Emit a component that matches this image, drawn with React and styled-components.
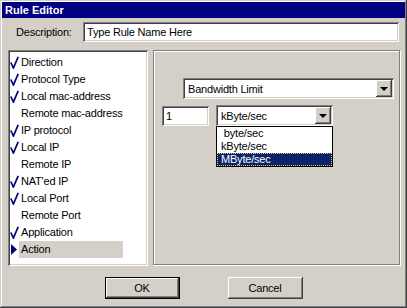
import styled, { createGlobalStyle } from "styled-components";

const Global = createGlobalStyle`
  body {
    margin: 0;
    background: #D4D0C8;
    font-family: "Liberation Sans", Arial, sans-serif;
    font-size: 11px;
    letter-spacing: -0.2px;
    color: #000;
  }
`;

const sunken = `
  box-shadow: inset 1px 1px #808080, inset -1px -1px #fff,
    inset 2px 2px #404040, inset -2px -2px #D4D0C8;
`;

const raised = `
  box-shadow: inset -1px -1px #404040, inset 1px 1px #fff,
    inset -2px -2px #808080, inset 2px 2px #D4D0C8;
`;

const Window = styled.div`
  box-sizing: border-box;
  width: 407px;
  height: 308px;
  padding: 2px;
  background: #D4D0C8;
  box-shadow: inset -1px -1px #404040, inset 1px 1px #D4D0C8,
    inset -2px -2px #808080, inset 2px 2px #fff;
  display: flex;
  flex-direction: column;
`;

const TitleBar = styled.div`
  height: 16px;
  line-height: 16px;
  padding-left: 3px;
  background: #000080;
  color: #fff;
  font-weight: bold;
  font-size: 11px;
  letter-spacing: 0;
`;

const DescRow = styled.div`
  display: flex;
  align-items: center;
  margin-top: 4px;
  height: 20px;
`;

const DescLabel = styled.span`
  width: 67px;
  padding-left: 14px;
  box-sizing: content-box;
`;

const TextField = styled.div`
  box-sizing: border-box;
  width: ${p => p.$w}px;
  height: ${p => p.$h || 20}px;
  margin-top: ${p => p.$mt || 0}px;
  padding: 0 4px;
  line-height: ${p => p.$h || 20}px;
  background: #fff;
  white-space: nowrap;
  ${sunken}
`;

const Body = styled.div`
  display: flex;
  gap: 5px;
  margin: 8px 0 0 6px;
`;

const ListBox = styled.div`
  box-sizing: border-box;
  width: 140px;
  height: 216px;
  padding: 4px 2px 2px 2px;
  background: #fff;
  ${sunken}
`;

const ListRow = styled.div`
  display: flex;
  align-items: center;
  height: 17px;
`;

const Mark = styled.span`
  display: flex;
  align-items: center;
  justify-content: ${p => (p.$arrow ? "flex-end" : "flex-start")};
  width: 9px;
  height: 17px;
  padding-right: ${p => (p.$arrow ? 2 : 0)}px;
  box-sizing: border-box;
`;

const RowLabel = styled.span`
  width: 104px;
  height: 17px;
  line-height: 17px;
  padding-left: 2px;
  box-sizing: border-box;
  white-space: nowrap;
  background: ${p => (p.$selected ? "#D4D0C8" : "transparent")};
`;

const Panel = styled.div`
  position: relative;
  box-sizing: border-box;
  width: 247px;
  height: 215px;
  border: 1px solid #808080;
  box-shadow: inset 1px 1px #fff, 1px 1px #fff;
  padding: 27px 0 0 8px;
  display: flex;
  flex-direction: column;
`;

const Select = styled.div`
  position: relative;
  box-sizing: border-box;
  width: ${p => p.$w}px;
  height: 21px;
  margin-left: ${p => p.$ml || 0}px;
  padding: 2px;
  display: flex;
  align-items: center;
  background: #fff;
  ${sunken}
`;

const SelectText = styled.span`
  flex: 1;
  padding-left: 3px;
  white-space: nowrap;
`;

const DropButton = styled.span`
  width: 16px;
  height: 17px;
  display: flex;
  align-items: center;
  justify-content: center;
  background: #D4D0C8;
  ${raised}
`;

const DownArrow = styled.span`
  width: 0;
  height: 0;
  border-left: 4px solid transparent;
  border-right: 4px solid transparent;
  border-top: 4px solid #000;
  margin-top: 1px;
`;

const UnitRow = styled.div`
  display: flex;
  gap: 7px;
  margin-top: 6px;
  align-items: flex-start;
`;

const DropList = styled.div`
  position: absolute;
  top: 100%;
  left: 0;
  box-sizing: border-box;
  width: 117px;
  border: 1px solid #000;
  background: #fff;
  z-index: 2;
`;

const DropItem = styled.div`
  box-sizing: border-box;
  height: 13px;
  line-height: 11px;
  padding-left: 3px;
  border: 1px ${p => (p.$active ? "dotted #E8C870" : "solid transparent")};
  background: ${p => (p.$active ? "#0A246A" : "#fff")};
  color: ${p => (p.$active ? "#fff" : "#000")};
  white-space: pre;
`;

const Buttons = styled.div`
  display: flex;
  justify-content: center;
  gap: 48px;
  margin-top: 11px;
`;

const Button = styled.div`
  box-sizing: border-box;
  width: 75px;
  height: 22px;
  display: flex;
  align-items: center;
  justify-content: center;
  background: #D4D0C8;
  border: ${p => (p.$default ? "1px solid #000" : "none")};
  box-shadow: ${p =>
    p.$default
      ? "inset -1px -1px #404040, inset 1px 1px #fff, inset -2px -2px #808080, inset 2px 2px #D4D0C8"
      : "inset -1px -1px #404040, inset 1px 1px #fff, inset -2px -2px #808080, inset 2px 2px #D4D0C8"};
`;

const Check = () => (
  <svg width="9" height="13" viewBox="0 0 9 13">
    <path d="M0.8 6.5 L3.4 12 L8.2 0.8" fill="none" stroke="#00007A" strokeWidth="1.7" />
  </svg>
);

const Arrow = () => (
  <svg width="6" height="11" viewBox="0 0 6 11">
    <path d="M0 0 L6 5.5 L0 11 Z" fill="#00007A" />
  </svg>
);

const rules = [
  { name: "Direction", on: true },
  { name: "Protocol Type", on: true },
  { name: "Local mac-address", on: true },
  { name: "Remote mac-address", on: false },
  { name: "IP protocol", on: true },
  { name: "Local IP", on: true },
  { name: "Remote IP", on: false },
  { name: "NAT'ed IP", on: true },
  { name: "Local Port", on: true },
  { name: "Remote Port", on: false },
  { name: "Application", on: true },
  { name: "Action", on: false, current: true },
];

const units = [" byte/sec", "kByte/sec", "MByte/sec"];

const App = () => {
  return (
    <>
      <Global />
      <Window>
        <TitleBar>Rule Editor</TitleBar>
        <DescRow>
          <DescLabel>Description:</DescLabel>
          <TextField $w={316}>Type Rule Name Here</TextField>
        </DescRow>
        <Body>
          <ListBox>
            {rules.map(r => (
              <ListRow key={r.name}>
                <Mark $arrow={r.current}>
                  {r.current ? <Arrow /> : r.on ? <Check /> : null}
                </Mark>
                <RowLabel $selected={r.current}>{r.name}</RowLabel>
              </ListRow>
            ))}
          </ListBox>
          <Panel>
            <Select $w={211} $ml={21}>
              <SelectText>Bandwidth Limit</SelectText>
              <DropButton><DownArrow /></DropButton>
            </Select>
            <UnitRow>
              <TextField $w={47} $h={20} $mt={1}>1</TextField>
              <Select $w={117}>
                <SelectText>kByte/sec</SelectText>
                <DropButton><DownArrow /></DropButton>
                <DropList>
                  {units.map((u, i) => (
                    <DropItem key={u} $active={i === 2}>{u}</DropItem>
                  ))}
                </DropList>
              </Select>
            </UnitRow>
          </Panel>
        </Body>
        <Buttons>
          <Button $default>OK</Button>
          <Button>Cancel</Button>
        </Buttons>
      </Window>
    </>
  );
};

export default App;
